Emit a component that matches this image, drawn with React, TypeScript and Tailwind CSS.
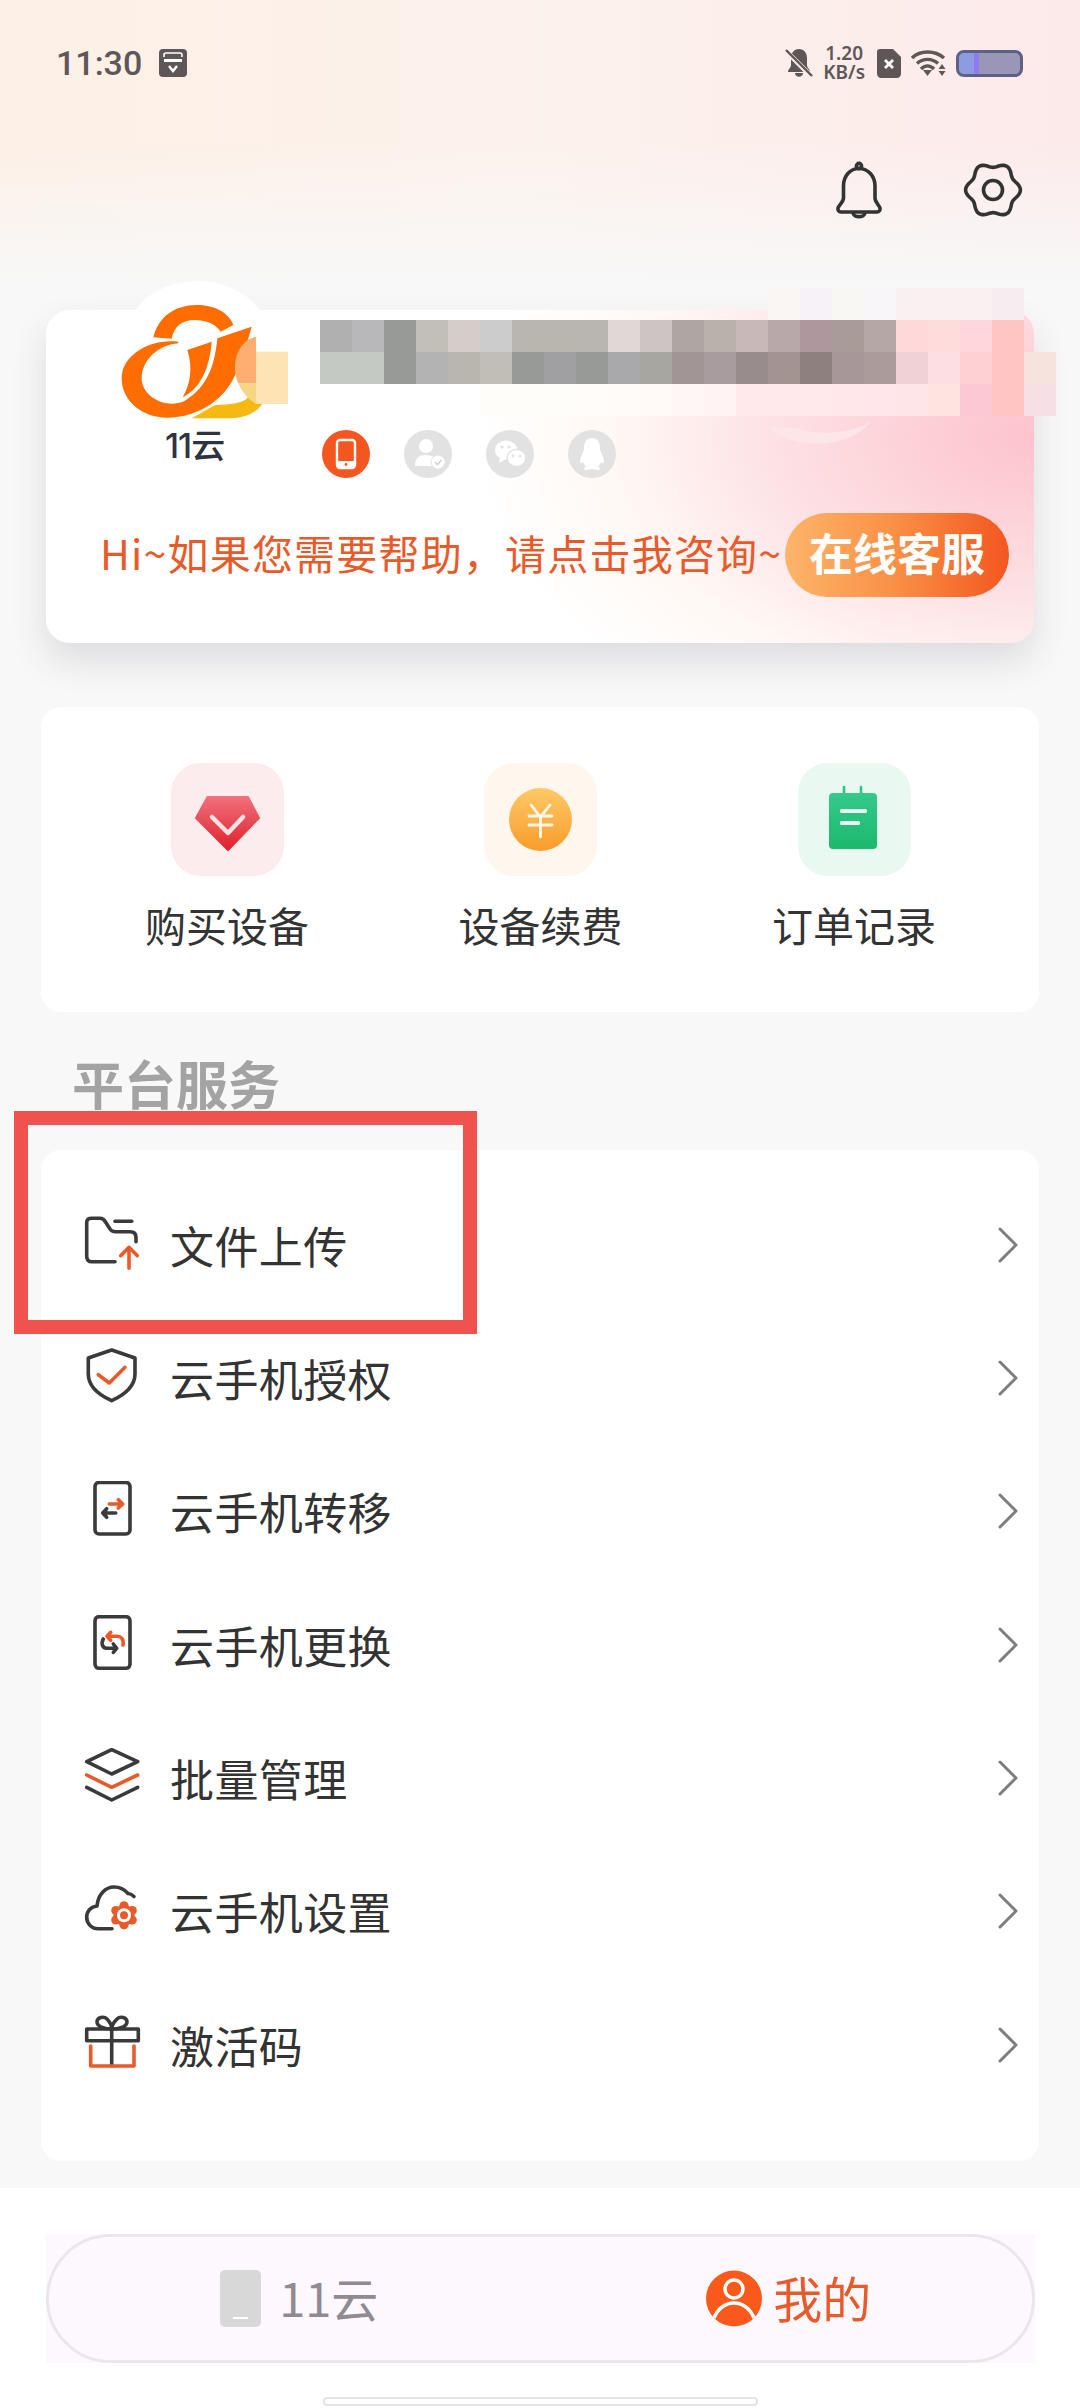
import { Fragment } from "react";

const DARK = "#3a3a3a";
const ORANGE = "#e95a2b";

const mosaic: string[][] = [
  ["", "", "", "", "", "", "", "", "", "", "", "", "", "", "bg-[#f9f6f3]", "bg-[#f6f2f8]", "bg-[#f9f7f4]", "bg-[#f8f6f9]", "bg-[#f8f0f1]", "bg-[#f8f0f1]", "bg-[#f8f0f1]", "bg-[#f7edf0]", ""],
  ["bg-[#b0b0b0]", "bg-[#b8b7b9]", "bg-[#989a98]", "bg-[#c2bfb9]", "bg-[#d6cdcb]", "bg-[#cccccc]", "bg-[#b9b6b0]", "bg-[#b9b6b0]", "bg-[#b9b6b1]", "bg-[#e0d8d6]", "bg-[#ccc5c4]", "bg-[#afa6a3]", "bg-[#b9b1ac]", "bg-[#c8b9b8]", "bg-[#b8a8a9]", "bg-[#ae979d]", "bg-[#a99c96]", "bg-[#b4a7a5]", "bg-[#ffd8da]", "bg-[#ffdcdc]", "bg-[#ffd6da]", "bg-[#ffc5c2]", ""],
  ["bg-[#c4c9c3]", "bg-[#c4c9c3]", "bg-[#979a96]", "bg-[#b3b3b3]", "bg-[#b9b6b0]", "bg-[#c1beb6]", "bg-[#979a96]", "bg-[#a09fa1]", "bg-[#979a96]", "bg-[#a9a8aa]", "bg-[#a8a6a1]", "bg-[#a19596]", "bg-[#a99c9e]", "bg-[#988c8d]", "bg-[#a39490]", "bg-[#8e807e]", "bg-[#a89798]", "bg-[#ab9c9b]", "bg-[#efd1d6]", "bg-[#fddfe3]", "bg-[#ffd0d3]", "bg-[#ffc5c2]", "bg-[#f6e3de]"],
  ["", "", "", "", "", "bg-[#fffdfa]", "bg-[#fffdfa]", "bg-[#fffdfa]", "bg-[#fffcfa]", "bg-[#fffbf9]", "bg-[#fff9f8]", "bg-[#fff7f6]", "bg-[#fff4f3]", "bg-[#ffe9ea]", "bg-[#ffe9ea]", "bg-[#ffe9ea]", "bg-[#ffe7ea]", "bg-[#fee6ea]", "bg-[#fee6e8]", "bg-[#fee4e1]", "bg-[#fcc8d4]", "bg-[#ffc5c2]", "bg-[#f6e0e6]"],
];

const gearPath = (() => {
  const pts: string[] = [];
  for (let i = 0; i < 120; i++) {
    const t = (i / 120) * Math.PI * 2;
    const r = 25 + 2.4 * Math.cos(6 * t);
    pts.push(`${(30 + r * Math.cos(t)).toFixed(2)} ${(30 + r * Math.sin(t)).toFixed(2)}`);
  }
  return "M" + pts.join("L") + "Z";
})();

function Chevron() {
  return (
    <svg width="24" height="38" viewBox="0 0 24 38" fill="none">
      <path d="M4 3 L20 19 L4 35" stroke="#7d7d7d" strokeWidth="3" strokeLinecap="round" strokeLinejoin="round" />
    </svg>
  );
}

function RowIcon({ children }: { children: React.ReactNode }) {
  return (
    <svg width="60" height="60" viewBox="0 0 60 60" fill="none" strokeLinecap="round" strokeLinejoin="round" strokeWidth="3.6">
      {children}
    </svg>
  );
}

const rows: { label: string; icon: React.ReactNode }[] = [
  {
    label: "文件上传",
    icon: (
      <RowIcon>
        <path stroke={DARK} d="M33 46.7H9.7C6.5 46.7 4.7 45 4.7 41.3V7.3C4.7 4.5 6.5 3.3 9.7 3.3H18C21 3.3 22.5 5 23.7 7.3L28 14C29 15.8 31 16.7 33.7 16.7H48C52 16.7 54 19 54 22.3V26.7" />
        <path stroke={DARK} d="M33 6.3H49.7" />
        <path stroke={ORANGE} d="M47 53.3V32.3M38.7 40.7L47 32.3L55.3 40.7" />
      </RowIcon>
    ),
  },
  {
    label: "云手机授权",
    icon: (
      <RowIcon>
        <path stroke={DARK} d="M29.7 2L53 10V26C53 38 42 47 29.7 52.7C17 47 6.3 38 6.3 26V10Z" />
        <path stroke={ORANGE} d="M16.3 26.7L27.3 35L43 19.3" />
      </RowIcon>
    ),
  },
  {
    label: "云手机转移",
    icon: (
      <RowIcon>
        <rect x="13" y="1.5" width="35" height="51.5" rx="4" stroke={DARK} />
        <path stroke={ORANGE} d="M27.3 23H40.7M36.3 18.7L40.7 23L36.3 27" />
        <path stroke={DARK} d="M33.7 32H20.7M24.7 27.7L20.7 32L24.7 36.3" />
      </RowIcon>
    ),
  },
  {
    label: "云手机更换",
    icon: (
      <RowIcon>
        <rect x="13" y="1.7" width="35" height="51.6" rx="4" stroke={DARK} />
        <path stroke={ORANGE} d="M25 21.3H35C39 21.3 42 24 41 30M28.7 17.3L25 21.3L28.7 25.3" />
        <path stroke={DARK} d="M34.7 33.3H24.7C21 33.3 18.5 29 21.3 24M31.3 29L34.7 33.3L31.3 37.3" />
      </RowIcon>
    ),
  },
  {
    label: "批量管理",
    icon: (
      <RowIcon>
        <path stroke={DARK} d="M29.7 1.7L55.7 13.7L29.7 26L4.7 13.7Z" />
        <path stroke={ORANGE} d="M4.7 27L29.7 39.3L55.7 27" />
        <path stroke={DARK} d="M4.7 39.3L29.7 52L55.7 39.3" />
      </RowIcon>
    ),
  },
  {
    label: "云手机设置",
    icon: (
      <RowIcon>
        <path stroke={DARK} d="M30 47.7H16C9 47.7 4.7 42 4.7 36C4.7 30 9 25.5 15 25C16 13 24 6 32 6C38 6 43 9 46 12.5C48 12.5 50 13.5 52 15.5" />
        <g fill={ORANGE} stroke="none">
          <circle cx="42" cy="24.8" r="4.6" />
          <circle cx="50.2" cy="29.6" r="4.6" />
          <circle cx="50.2" cy="39" r="4.6" />
          <circle cx="42" cy="43.8" r="4.6" />
          <circle cx="33.8" cy="39" r="4.6" />
          <circle cx="33.8" cy="29.6" r="4.6" />
          <circle cx="42" cy="34.3" r="10.5" />
        </g>
        <circle cx="42" cy="34.3" r="7" fill="#ffffff" stroke="none" />
        <circle cx="42" cy="34.3" r="4" fill={ORANGE} stroke="none" />
      </RowIcon>
    ),
  },
  {
    label: "激活码",
    icon: (
      <RowIcon>
        <rect x="4.7" y="14" width="51.6" height="11.7" stroke={DARK} />
        <path stroke={DARK} d="M29.7 14V50.7" />
        <path stroke={DARK} d="M29.7 14C24 14 15 12 15 7C15 2 22 1 25 4C28 7 29.7 10 29.7 14C29.7 10 32 7 35 4C38 1 45 2 45 7C45 12 36 14 29.7 14Z" />
        <path stroke={ORANGE} d="M8.7 31V51H52V31" />
      </RowIcon>
    ),
  },
];

function StatusBar() {
  return (
    <div className="flex items-center justify-between pl-[56px] pr-[57px] h-[36px]">
      <div className="flex items-center gap-[17px]">
        <span className="font-['Roboto',sans-serif] font-medium text-[34px] leading-none text-[#5f5757]">11:30</span>
        <svg width="28" height="28" viewBox="0 0 28 28">
          <rect width="28" height="28" rx="4" fill="#5f5757" />
          <path d="M5 8V6C5 5 6 4 7 4H21C22 4 23 5 23 6V8" fill="none" stroke="#fff" strokeWidth="1.6" />
          <rect x="5" y="10" width="18" height="3" fill="#fff" />
          <path d="M10 17L14 22L18 17" fill="none" stroke="#fff" strokeWidth="2.4" />
        </svg>
      </div>
      <div className="flex items-center">
        <svg width="28" height="30" viewBox="0 0 28 30">
          <path d="M14 1C9 1 6 5 6 10V17C6 20 3 21 3 24H25C25 21 22 20 22 17V10C22 5 19 1 14 1Z" fill="#5f5757" />
          <path d="M10 25C10 30 18 30 18 25Z" fill="#5f5757" />
          <path d="M1 3L27 29" stroke="#fdeaea" strokeWidth="5" />
          <path d="M1 2L27 28" stroke="#5f5757" strokeWidth="2.4" />
        </svg>
        <span className="ml-[10px] text-center font-['Noto_Sans',sans-serif] font-semibold text-[19px] leading-[19px] text-[#5f5757]">
          1.20
          <br />
          KB/s
        </span>
        <svg className="ml-[12px]" width="24" height="29" viewBox="0 0 24 29">
          <path d="M3 0H16L24 8V25C24 27 22 29 20 29H4C2 29 0 27 0 25V3C0 1 1 0 3 0Z" fill="#5f5757" />
          <path d="M8 11L16 19M16 11L8 19" stroke="#fff" strokeWidth="2.8" />
        </svg>
        <svg className="ml-[10px]" width="35" height="27" viewBox="0 0 35 27" fill="none">
          <path d="M1 8C9 0 24 0 33 8" stroke="#5f5757" strokeWidth="3.4" />
          <path d="M6 13.5C12 8 21 8 27 13.5" stroke="#5f5757" strokeWidth="3.4" />
          <path d="M10 19C14 15 19 15 23 19" stroke="#5f5757" strokeWidth="3.4" />
          <path d="M12 20H21L16.5 26Z" fill="#5f5757" />
          <path d="M31 14L34.5 19H27.5ZM27.5 21H34.5L31 26Z" fill="#5f5757" />
        </svg>
        <div className="ml-[10px] relative w-[67px] h-[27px] rounded-[8px] border-[3px] border-[#5c6185] bg-[#9a96b8] overflow-hidden">
          <div className="h-full w-[20px] bg-[#8d9be0] border-r-[5px] border-[#8f7bf0]" />
        </div>
      </div>
    </div>
  );
}

function Header() {
  return (
    <header className="h-[310px] pt-[45px] bg-[linear-gradient(180deg,rgba(248,248,248,0)_0%,rgba(248,248,248,0)_45%,#f8f8f8_92%),linear-gradient(90deg,#fdf0e6_0%,#fcf2ec_50%,#fceaea_100%)]">
      <StatusBar />
      <div className="mt-[79px] flex justify-end pr-[57px] gap-[78px]">
        <svg width="50" height="60" viewBox="0 0 50 60" fill="none" stroke="#333" strokeWidth="3.6" strokeLinejoin="round">
          <path d="M24 8.5C15 8.5 8.5 16 8.5 26V38C8.5 42 4 45 3 48C2.5 50.5 4 52 6 52H42C44 52 45.5 50.5 45 48C44 45 40 42 40 38V26C40 16 33 8.5 24 8.5Z" />
          <circle cx="24" cy="6" r="2.6" />
          <path d="M18 52.5C18 58 30 58 30 52.5" />
        </svg>
        <svg width="60" height="60" viewBox="0 0 60 60" fill="none" stroke="#333" strokeWidth="3.6">
          <path d={gearPath} />
          <circle cx="30" cy="30" r="9.5" />
        </svg>
      </div>
    </header>
  );
}

function Logo() {
  return (
    <svg className="absolute left-[54px] top-[-30px]" width="240" height="160" viewBox="0 0 720 480">
      <path fill="#ff6c00" d="M160 172C175 110 225 75 290 75C340 75 385 95 400 135L362 155C345 130 315 120 285 120C245 120 222 140 215 176Z" />
      <path fill="#ff6c00" d="M235 185C150 175 65 225 65 295C65 365 130 415 205 413C300 410 385 355 415 260C430 215 445 180 455 140L352 175C345 250 325 320 255 362C235 372 215 372 200 370C155 362 125 330 125 295C125 245 170 195 235 190Z" />
      <path fill="#ff6c00" d="M262 210L335 185C330 250 310 320 248 352C270 315 280 265 262 210Z" />
      <path fill="#f6b90f" d="M275 415L345 375C390 372 430 372 445 350L488 370C470 400 430 415 390 415Z" />
      <path fill="#ffae72" d="M468 170C425 180 405 220 405 262C405 280 408 295 415 310H468Z" />
      <path fill="#f5d685" d="M415 310C425 335 445 358 468 372V310Z" />
      <rect x="468" y="215" width="96" height="157" fill="#fee4b4" />
    </svg>
  );
}

function SocialIcons() {
  return (
    <div className="flex gap-[34px]">
      <svg width="48" height="48" viewBox="0 0 48 48">
        <circle cx="24" cy="24" r="24" fill="#f4561f" />
        <rect x="15" y="10" width="18" height="28" rx="3" fill="none" stroke="#fff" strokeWidth="2.4" />
        <rect x="15" y="31" width="18" height="7" rx="2" fill="#fff" />
        <circle cx="24" cy="34.5" r="1.4" fill="#f4561f" />
      </svg>
      <svg width="48" height="48" viewBox="0 0 48 48">
        <circle cx="24" cy="24" r="24" fill="#e2e2e2" />
        <circle cx="22" cy="16" r="7" fill="#fff" />
        <path d="M11 36C11 28 15 25 22 25C26 25 28 26 29 27C26 30 26 33 28 36Z" fill="#fff" />
        <circle cx="34" cy="32" r="6.5" fill="#fff" />
        <path d="M31 32L33.5 34.5L37.5 30" fill="none" stroke="#d0d0d0" strokeWidth="1.6" />
      </svg>
      <svg width="48" height="48" viewBox="0 0 48 48">
        <circle cx="24" cy="24" r="24" fill="#e2e2e2" />
        <ellipse cx="20" cy="20" rx="11" ry="9.5" fill="#fff" />
        <path d="M14 27L13 33L20 29Z" fill="#fff" />
        <ellipse cx="30.5" cy="28" rx="9.5" ry="8.5" fill="#fff" stroke="#e2e2e2" strokeWidth="1.5" />
        <circle cx="16" cy="17" r="1.6" fill="#e2e2e2" />
        <circle cx="23" cy="17" r="1.6" fill="#e2e2e2" />
        <circle cx="27" cy="26" r="1.4" fill="#e2e2e2" />
        <circle cx="34" cy="26" r="1.4" fill="#e2e2e2" />
      </svg>
      <svg width="48" height="48" viewBox="0 0 48 48">
        <circle cx="24" cy="24" r="24" fill="#e2e2e2" />
        <path d="M24 8C18 8 16 13 16 18C16 22 12 27 12 32C12 34 14 33 15 32C16 35 17 36 18 37C15 38 15 40 19 40C21 40 23 39 24 39C25 39 27 40 29 40C33 40 33 38 30 37C31 36 32 35 33 32C34 33 36 34 36 32C36 27 32 22 32 18C32 13 30 8 24 8Z" fill="#fff" />
      </svg>
    </div>
  );
}

function ProfileCard() {
  return (
    <section className="relative mx-[46px] h-[333px] rounded-[24px] shadow-[0_18px_36px_rgba(60,60,80,0.14)] bg-[radial-gradient(ellipse_560px_340px_at_100%_38%,#fdc3cc_0%,#fde0e3_45%,#fff8f4_75%,#ffffff_100%)] pt-[120px]">
      <div className="absolute left-[79px] top-[-29px] w-[145px] h-[60px] bg-white rounded-t-[50%_100%]" />
      <Logo />
      <svg className="absolute left-[700px] top-[100px]" width="150" height="60" viewBox="0 0 150 60">
        <path d="M21 17C50 40 100 40 125 12C100 25 70 25 50 18Z" fill="#fde6e8" />
      </svg>
      <div className="absolute left-[119px] top-[116px] font-['Inter','Noto_Sans_CJK_SC',sans-serif] font-medium text-[34px] leading-[40px] tracking-[-1px] text-[#2f333f]">11云</div>
      <div className="absolute left-[274px] top-[-22px] grid grid-cols-[repeat(23,32px)] auto-rows-[32px]">
        {mosaic.map((row, r) => (
          <Fragment key={r}>
            {row.map((c, i) => (
              <div key={i} className={c} />
            ))}
          </Fragment>
        ))}
      </div>
      <div className="relative pl-[276px]">
        <SocialIcons />
      </div>
      <div className="relative mt-[35px] flex items-center pl-[54px]">
        <span className="h-[84px] text-[41px] leading-[78px] tracking-[1.2px] text-[#e85a2a] whitespace-nowrap w-[685px]">Hi~如果您需要帮助，请点击我咨询~</span>
        <div className="w-[224px] h-[84px] pb-[6px] rounded-full bg-[linear-gradient(90deg,#fdb56a_0%,#f98f45_50%,#f4561f_100%)] flex items-center justify-center text-[44px] font-bold text-white">
          在线客服
        </div>
      </div>
    </section>
  );
}

function QuickActions() {
  return (
    <section className="mx-[41px] mt-[64px] h-[305px] rounded-[20px] bg-white pt-[56px] pl-[104px] pr-[103px] flex justify-between">
      <div className="flex flex-col items-center w-[164px]">
        <svg width="113" height="113" viewBox="0 0 113 113">
          <defs>
            <linearGradient id="gem" x1="0" y1="0" x2="0" y2="1">
              <stop offset="0" stopColor="#f0707b" />
              <stop offset="1" stopColor="#e0202a" />
            </linearGradient>
          </defs>
          <rect width="113" height="113" rx="30" fill="#fdecee" />
          <path d="M36.5 34H77L88 55L57 87L25 55Z" fill="url(#gem)" stroke="url(#gem)" strokeWidth="2" strokeLinejoin="round" />
          <path d="M41 54L57 70L72 54" fill="none" stroke="#fff" strokeOpacity="0.85" strokeWidth="4.5" strokeLinecap="round" strokeLinejoin="round" />
        </svg>
        <span className="mt-[23px] text-[41px] leading-[50px] text-[#333]">购买设备</span>
      </div>
      <div className="flex flex-col items-center w-[164px]">
        <svg width="113" height="113" viewBox="0 0 113 113">
          <defs>
            <linearGradient id="coin" x1="0" y1="0" x2="0" y2="1">
              <stop offset="0" stopColor="#fdc966" />
              <stop offset="1" stopColor="#f99c2c" />
            </linearGradient>
          </defs>
          <rect width="113" height="113" rx="30" fill="#fff7ee" />
          <circle cx="56.5" cy="56.5" r="31.5" fill="url(#coin)" />
          <path d="M47 42L56.5 54L66 42M45 53H68M45 62H68M56.5 54V74" fill="none" stroke="#fff" strokeWidth="2.8" strokeLinecap="round" strokeOpacity="0.9" />
        </svg>
        <span className="mt-[23px] text-[41px] leading-[50px] text-[#333]">设备续费</span>
      </div>
      <div className="flex flex-col items-center w-[164px]">
        <svg width="113" height="113" viewBox="0 0 113 113">
          <defs>
            <linearGradient id="note" x1="0" y1="0" x2="0" y2="1">
              <stop offset="0" stopColor="#35c98d" />
              <stop offset="1" stopColor="#1cb86c" />
            </linearGradient>
          </defs>
          <rect width="113" height="113" rx="30" fill="#e9f8f1" />
          <path d="M46 24V32M63 24V32" stroke="#2fc388" strokeWidth="2.6" strokeLinecap="round" />
          <rect x="31" y="30" width="48" height="56" rx="4" fill="url(#note)" />
          <rect x="42" y="46" width="27" height="4" rx="1.5" fill="#fff" fillOpacity="0.9" />
          <rect x="42" y="58" width="20" height="4" rx="1.5" fill="#fff" fillOpacity="0.9" />
        </svg>
        <span className="mt-[23px] text-[41px] leading-[50px] text-[#333]">订单记录</span>
      </div>
    </section>
  );
}

function ServiceList() {
  return (
    <section className="mx-[41px] h-[1011px] rounded-[20px] bg-white pt-[28px]">
      {rows.map((r) => (
        <div key={r.label} className="h-[133.33px] flex items-center pl-[41px] pr-[19px]">
          {r.icon}
          <span className="ml-[28px] flex-1 text-[44px] leading-[50px] tracking-[0.4px] text-[#333]">{r.label}</span>
          <Chevron />
        </div>
      ))}
    </section>
  );
}

function BottomNav() {
  return (
    <footer className="mt-[27px] h-[220px] bg-white pt-[46px] flex flex-col items-center">
      <div className="w-[989px] h-[129px] bg-[#fdf8fe]">
        <div className="h-full rounded-full border-[3px] border-[#ebe6ee] grid grid-cols-2">
          <div className="flex items-center justify-center gap-[18px] pl-[10px]">
            <div className="w-[41px] h-[57px] rounded-[5px] bg-[#d8d8d8] flex items-end justify-center pb-[8px]">
              <div className="w-[15px] h-[2px] bg-white" />
            </div>
            <span className="pb-[5px] text-[47px] leading-none text-[#908a93]">11云</span>
          </div>
          <div className="flex items-center justify-center gap-[11px] pl-[6px]">
            <svg width="56" height="57" viewBox="0 0 56 57">
              <circle cx="28" cy="28.5" r="28" fill="#f95a1c" />
              <circle cx="28" cy="19" r="9" fill="none" stroke="#fff" strokeWidth="3.4" />
              <path d="M8 48C12 38 20 33 28 33C36 33 44 38 48 48" fill="none" stroke="#fff" strokeWidth="3.4" />
            </svg>
            <span className="pb-[5px] text-[49px] leading-none text-[#e85a2a]">我的</span>
          </div>
        </div>
      </div>
      <div className="mt-[34px] w-[435px] h-[9px] rounded-[4px] bg-white border-2 border-[#e4e4e4]" />
    </footer>
  );
}

export default function App() {
  return (
    <div className="relative w-[1080px] h-[2408px] overflow-hidden bg-[#f8f8f8] font-['Noto_Sans_CJK_SC','Noto_Sans',sans-serif]">
      <Header />
      <ProfileCard />
      <QuickActions />
      <h2 className="h-[138px] mx-[41px] pl-[31px] pt-[40px] text-[52px] leading-[62px] font-bold text-[#a3a3a3]">平台服务</h2>
      <ServiceList />
      <BottomNav />
      <div className="absolute left-[14px] top-[1111px] w-[463px] h-[223px] border-[14px] border-[#f0534d]" />
    </div>
  );
}
